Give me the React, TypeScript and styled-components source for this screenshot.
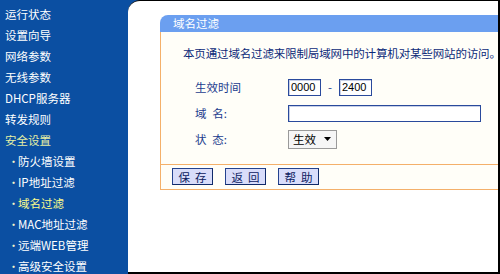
import React, { useState } from "react";
import styled, { createGlobalStyle } from "styled-components";

const GlobalStyle = createGlobalStyle`
  html, body {
    margin: 0;
    padding: 0;
    overflow: hidden;
  }
  body {
    font-family: "Noto Sans CJK SC", "Liberation Sans", sans-serif;
  }
`;

const Page = styled.div`
  display: flex;
  width: 500px;
  height: 274px;
  background: #0b4fa2;
  overflow: hidden;
  font-size: 11.5px;
`;

const Sidebar = styled.nav`
  width: 128px;
  flex-shrink: 0;
  padding-top: 4px;
  display: flex;
  flex-direction: column;
`;

const MenuItem = styled.div<{ $sub?: boolean; $color?: string }>`
  height: 21px;
  line-height: 21px;
  padding-left: ${(p) => (p.$sub ? "8px" : "5px")};
  color: ${(p) => p.$color || "#ffffff"};
  white-space: nowrap;
  display: flex;
  align-items: center;
`;

const Bullet = styled.span`
  width: 10px;
  font-size: 11px;
  color: #f4f4c8;
`;

const Main = styled.main`
  flex: 1;
  background: #ffffff;
  border-top-left-radius: 12px;
  border-top: 1px solid #000;
  border-right: 2px solid #000;
  border-bottom: 2px solid #000;
  padding: 14px 0 0 32px;
  overflow: hidden;
  box-sizing: border-box;
`;

const Panel = styled.section`
  display: flex;
  flex-direction: column;
`;

const PanelHeader = styled.div`
  height: 17px;
  line-height: 17px;
  background: #6b9ff0;
  border-top-left-radius: 8px;
  color: #ffffff;
  padding-left: 13px;
`;

const PanelBody = styled.div`
  background: #fffef8;
  border-left: 1px solid #f4b06a;
  border-bottom: 1px solid #f4b06a;
`;

const Description = styled.div`
  padding: 13px 0 0 22px;
  height: 16px;
  line-height: 16px;
  color: #0c2a78;
  white-space: nowrap;
  letter-spacing: -0.15px;
`;

const Form = styled.div`
  padding: 13px 0 12px 34px;
  display: flex;
  flex-direction: column;
`;

const Row = styled.div`
  display: flex;
  align-items: center;
  height: 26px;
`;

const Label = styled.label`
  width: 93px;
  color: #1c3c8e;
  white-space: pre;
`;

const TextBox = styled.input<{ $w: number }>`
  width: ${(p) => p.$w}px;
  height: 17px;
  box-sizing: border-box;
  border: 1px solid #2a4a9c;
  box-shadow: inset 1px 1px 0 #c8d0e6;
  background: #ffffff;
  padding: 0 2px;
  font-family: "Liberation Sans", sans-serif;
  font-size: 11px;
  color: #000;
  outline: none;
`;

const Dash = styled.span`
  width: 18px;
  text-align: center;
  color: #1c3c8e;
`;

const Select = styled.div`
  width: 49px;
  height: 19px;
  box-sizing: border-box;
  border: 1px solid #9a9a9a;
  background: #f6f6f6;
  display: flex;
  align-items: center;
  padding-left: 4px;
  gap: 8px;
  color: #000;
`;

const Caret = styled.svg`
  width: 7px;
  height: 4px;
`;

const ButtonBar = styled.div`
  border-top: 1px solid #f4b06a;
  padding: 3px 0 4px 11px;
  display: flex;
  gap: 12px;
`;

const Button = styled.button`
  width: 41px;
  height: 17px;
  box-sizing: border-box;
  padding: 0;
  background: #d9ddfa;
  border: 1px solid #24428e;
  border-right-color: #102a6a;
  border-bottom-color: #102a6a;
  color: #0c2060;
  font-family: "Noto Sans CJK SC", sans-serif;
  font-size: 11.5px;
  line-height: 14px;
  letter-spacing: 5px;
  text-indent: 5px;
`;

const menu: { text: string; sub?: boolean; color?: string }[] = [
  { text: "运行状态" },
  { text: "设置向导" },
  { text: "网络参数" },
  { text: "无线参数" },
  { text: "DHCP服务器" },
  { text: "转发规则" },
  { text: "安全设置", color: "#e6f0a4" },
  { text: "防火墙设置", sub: true },
  { text: "IP地址过滤", sub: true },
  { text: "域名过滤", sub: true, color: "#fcfc8c" },
  { text: "MAC地址过滤", sub: true },
  { text: "远端WEB管理", sub: true },
  { text: "高级安全设置", sub: true },
];

export default function App() {
  const [start, setStart] = useState("0000");
  const [end, setEnd] = useState("2400");
  const [domain, setDomain] = useState("");

  return (
    <>
      <GlobalStyle />
      <Page>
        <Sidebar>
          {menu.map((m) => (
            <MenuItem key={m.text} $sub={m.sub} $color={m.color}>
              {m.sub && <Bullet>•</Bullet>}
              {m.text}
            </MenuItem>
          ))}
        </Sidebar>
        <Main>
          <Panel>
            <PanelHeader>域名过滤</PanelHeader>
            <PanelBody>
              <Description>
                本页通过域名过滤来限制局域网中的计算机对某些网站的访问。
              </Description>
              <Form>
                <Row>
                  <Label>生效时间</Label>
                  <TextBox $w={33} value={start} onChange={(e) => setStart(e.target.value)} />
                  <Dash>-</Dash>
                  <TextBox $w={33} value={end} onChange={(e) => setEnd(e.target.value)} />
                </Row>
                <Row>
                  <Label>{"域\u2002名:"}</Label>
                  <TextBox $w={193} value={domain} onChange={(e) => setDomain(e.target.value)} />
                </Row>
                <Row>
                  <Label>{"状\u2002态:"}</Label>
                  <Select>
                    生效
                    <Caret viewBox="0 0 7 4">
                      <path d="M0 0 H7 L3.5 4 Z" fill="#000" />
                    </Caret>
                  </Select>
                </Row>
              </Form>
              <ButtonBar>
                <Button>保存</Button>
                <Button>返回</Button>
                <Button>帮助</Button>
              </ButtonBar>
            </PanelBody>
          </Panel>
        </Main>
      </Page>
    </>
  );
}
